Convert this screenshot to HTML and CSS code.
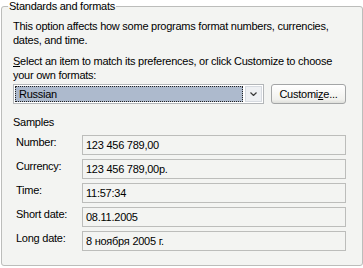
FILE: index.html
```
<!DOCTYPE html>
<html lang="en">
<head>
    <meta charset="UTF-8">
    <meta name="viewport" content="width=device-width, initial-scale=1.0">
    <title>Regional Options</title>
    <link rel="stylesheet" href="styles.css">
</head>
<body>
    <fieldset class="group">
        <legend>Standards and formats</legend>

        <p class="desc">This option affects how some programs format numbers, currencies,<br>dates, and time.</p>
        <p class="desc hint"><u>S</u>elect an item to match its preferences, or click Customize to choose<br>your own formats:</p>

        <div class="locale-row">
            <div class="combo">
                <span class="combo-value">Russian</span>
                <span class="combo-arrow">
                    <svg width="7" height="4" viewBox="0 0 7 4">
                        <path d="M0.5 0.5 L3.5 3.5 L6.5 0.5" fill="none" stroke="#3a3a3a" stroke-width="1.2"/>
                    </svg>
                </span>
            </div>
            <button class="btn">Customi<u>z</u>e...</button>
        </div>

        <div class="samples-title">Samples</div>
        <div class="samples">
            <div class="sample-row">
                <span class="sample-label">Number:</span>
                <span class="sample-box">123 456 789,00</span>
            </div>
            <div class="sample-row">
                <span class="sample-label">Currency:</span>
                <span class="sample-box">123 456 789,00р.</span>
            </div>
            <div class="sample-row">
                <span class="sample-label">Time:</span>
                <span class="sample-box">11:57:34</span>
            </div>
            <div class="sample-row">
                <span class="sample-label">Short date:</span>
                <span class="sample-box">08.11.2005</span>
            </div>
            <div class="sample-row">
                <span class="sample-label">Long date:</span>
                <span class="sample-box">8 ноября 2005 г.</span>
            </div>
        </div>
    </fieldset>
</body>
</html>
```

FILE: styles.css
```
* {
    margin: 0;
    padding: 0;
    box-sizing: border-box;
}

body {
    background: #fff;
    font-family: 'Liberation Sans', Arial, sans-serif;
    font-size: 11px;
    letter-spacing: -0.25px;
    line-height: 14px;
    color: #000;
}

.group {
    margin: 0 0 0 1px;
    padding: 6px 16px 14px 11px;
    border: 1px solid #bcbdbb;
    border-radius: 3px;
    background: #f3f4f2;
}

.group legend {
    margin-left: -5px;
    padding: 0 1px;
    line-height: 13px;
}

.desc {
    white-space: nowrap;
}

.hint {
    margin-top: 7px;
}

.locale-row {
    display: flex;
    gap: 7px;
    margin-top: 2px;
    height: 20px;
}

.combo {
    width: 251px;
    display: flex;
    padding: 1px;
    border: 1px solid #b3b6b9;
    background: #fff;
}

.combo-value {
    flex: 1;
    padding-left: 3px;
    line-height: 14px;
    background: #adbacd;
    border: 1px dotted #222;
}

.combo-arrow {
    width: 17px;
    margin-left: 2px;
    display: flex;
    align-items: center;
    justify-content: center;
    background: #eef0f3;
    border: 1px solid #d6dae0;
}

.btn {
    width: 75px;
    font: inherit;
    letter-spacing: inherit;
    color: #000;
    border: 1px solid #a3a5a6;
    border-radius: 3px;
    background: linear-gradient(#ffffff, #f1f1ee 80%, #dedfdb);
}

.samples-title {
    margin-top: 11px;
}

.samples {
    display: flex;
    flex-direction: column;
    gap: 4px;
    margin-top: 6px;
}

.sample-row {
    display: flex;
    align-items: flex-start;
}

.sample-label {
    width: 69px;
    padding-left: 3px;
}

.sample-box {
    flex: 1;
    height: 20px;
    padding: 2px 3px;
    border: 1px solid #bcbdbb;
}
```
